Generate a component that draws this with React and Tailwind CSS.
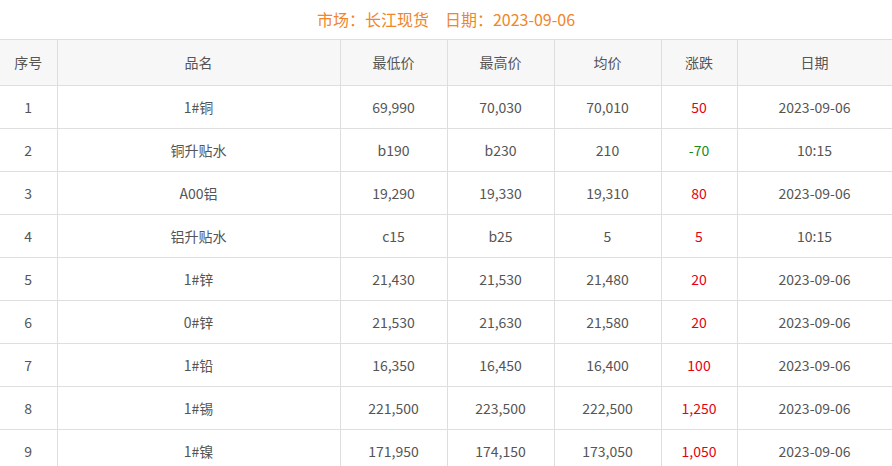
import React from 'react';

const rows = [
    ['1', '1#铜', '69,990', '70,030', '70,010', '50', '2023-09-06'],
    ['2', '铜升贴水', 'b190', 'b230', '210', '-70', '10:15'],
    ['3', 'A00铝', '19,290', '19,330', '19,310', '80', '2023-09-06'],
    ['4', '铝升贴水', 'c15', 'b25', '5', '5', '10:15'],
    ['5', '1#锌', '21,430', '21,530', '21,480', '20', '2023-09-06'],
    ['6', '0#锌', '21,530', '21,630', '21,580', '20', '2023-09-06'],
    ['7', '1#铅', '16,350', '16,450', '16,400', '100', '2023-09-06'],
    ['8', '1#锡', '221,500', '223,500', '222,500', '1,250', '2023-09-06'],
    ['9', '1#镍', '171,950', '174,150', '173,050', '1,050', '2023-09-06'],
];

const heads = ['序号', '品名', '最低价', '最高价', '均价', '涨跌', '日期'];
const widths = ['w-[57px]', 'w-[283px]', 'w-[107px]', 'w-[107px]', 'w-[107px]', 'w-[76px]', 'w-[155px]'];

const App = () => {
    return (
        <div className="w-[892px] bg-white text-[#555] font-['Microsoft_YaHei','Noto_Sans_CJK_SC',sans-serif]">
            <div className="h-[39px] flex items-center justify-center text-[16px] text-[#f0862a] pb-[1px]">
                <span>市场：长江现货</span>
                <span className="ml-[16px]">日期：2023-09-06</span>
            </div>
            <table className="w-[892px] table-fixed border-collapse text-[14px] text-center">
                <colgroup>
                    {widths.map((w, i) => <col key={i} className={w} />)}
                </colgroup>
                <thead>
                    <tr className="h-[46px] bg-[#f7f7f7]">
                        {heads.map((h, i) => (
                            <th key={i} className={`font-normal border border-[#dedede] ${i === 0 ? 'border-l-0' : ''}`}>{h}</th>
                        ))}
                    </tr>
                </thead>
                <tbody>
                    {rows.map((r) => (
                        <tr key={r[0]} className="h-[43px]">
                            {r.map((c, i) => {
                                let color = '';
                                if (i === 5) color = c.startsWith('-') ? 'text-[#1a8a1a]' : 'text-[#e50012]';
                                return (
                                    <td key={i} className={`border border-[#dedede] ${i === 0 ? 'border-l-0' : ''} ${color}`}>{c}</td>
                                );
                            })}
                        </tr>
                    ))}
                </tbody>
            </table>
        </div>
    );
};

export default App;
